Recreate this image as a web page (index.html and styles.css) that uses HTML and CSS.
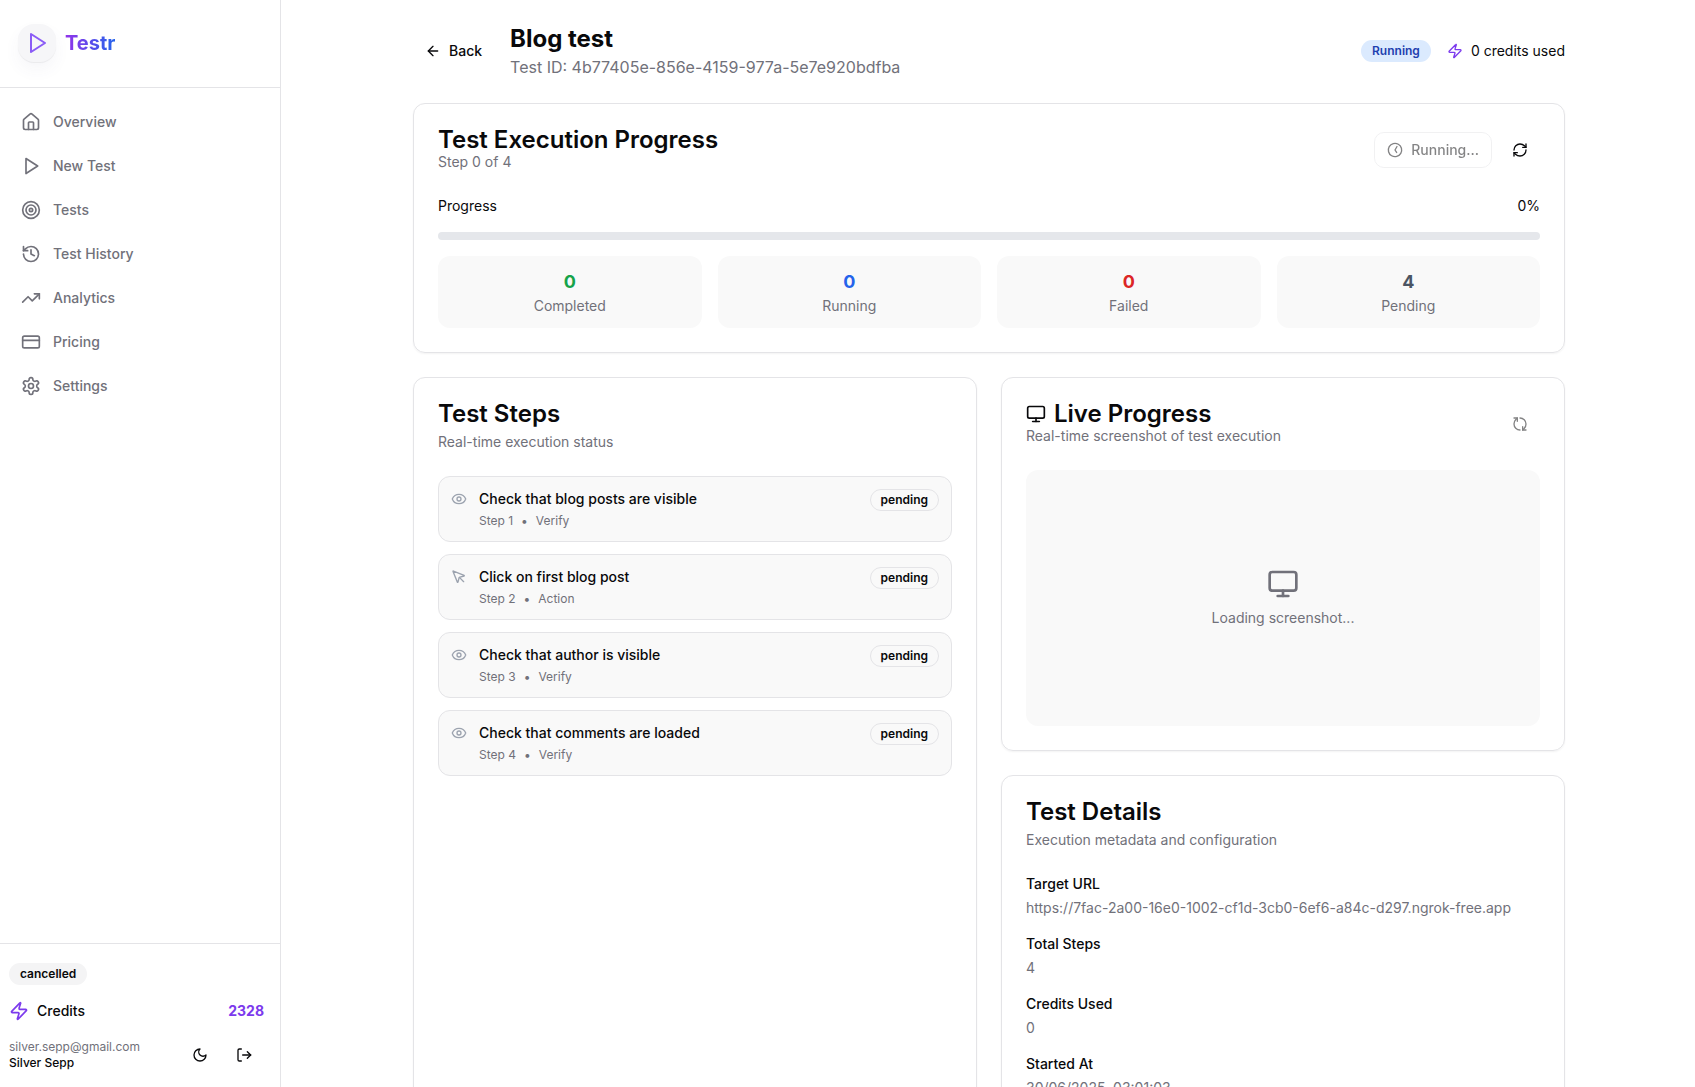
FILE: index.html
```html
<!DOCTYPE html>
<html lang="en">
<head>
<meta charset="utf-8">
<title>Blog test - Testr</title>
<meta name="viewport" content="width=device-width, initial-scale=1">
<link rel="stylesheet" href="styles.css">
</head>
<body>
<svg class="sprite" aria-hidden="true">
  <symbol id="play" viewBox="0 0 24 24"><polygon points="6 3 20 12 6 21 6 3"/></symbol>
  <symbol id="house" viewBox="0 0 24 24"><path d="M15 21v-8a1 1 0 0 0-1-1h-4a1 1 0 0 0-1 1v8"/><path d="M3 10a2 2 0 0 1 .709-1.528l7-5.999a2 2 0 0 1 2.582 0l7 5.999A2 2 0 0 1 21 10v9a2 2 0 0 1-2 2H5a2 2 0 0 1-2-2z"/></symbol>
  <symbol id="target" viewBox="0 0 24 24"><circle cx="12" cy="12" r="10"/><circle cx="12" cy="12" r="6"/><circle cx="12" cy="12" r="2"/></symbol>
  <symbol id="history" viewBox="0 0 24 24"><path d="M3 12a9 9 0 1 0 9-9 9.75 9.75 0 0 0-6.74 2.74L3 8"/><path d="M3 3v5h5"/><path d="M12 7v5l4 2"/></symbol>
  <symbol id="trending" viewBox="0 0 24 24"><polyline points="22 7 13.5 15.5 8.5 10.5 2 17"/><polyline points="16 7 22 7 22 13"/></symbol>
  <symbol id="card" viewBox="0 0 24 24"><rect width="20" height="14" x="2" y="5" rx="2"/><line x1="2" x2="22" y1="10" y2="10"/></symbol>
  <symbol id="settings" viewBox="0 0 24 24"><path d="M12.22 2h-.44a2 2 0 0 0-2 2v.18a2 2 0 0 1-1 1.73l-.43.25a2 2 0 0 1-2 0l-.15-.08a2 2 0 0 0-2.73.73l-.22.38a2 2 0 0 0 .73 2.73l.15.1a2 2 0 0 1 1 1.72v.51a2 2 0 0 1-1 1.74l-.15.09a2 2 0 0 0-.73 2.73l.22.38a2 2 0 0 0 2.73.73l.15-.08a2 2 0 0 1 2 0l.43.25a2 2 0 0 1 1 1.73V20a2 2 0 0 0 2 2h.44a2 2 0 0 0 2-2v-.18a2 2 0 0 1 1-1.73l.43-.25a2 2 0 0 1 2 0l.15.08a2 2 0 0 0 2.73-.73l.22-.39a2 2 0 0 0-.73-2.73l-.15-.08a2 2 0 0 1-1-1.74v-.5a2 2 0 0 1 1-1.74l.15-.09a2 2 0 0 0 .73-2.73l-.22-.38a2 2 0 0 0-2.73-.73l-.15.08a2 2 0 0 1-2 0l-.43-.25a2 2 0 0 1-1-1.73V4a2 2 0 0 0-2-2z"/><circle cx="12" cy="12" r="3"/></symbol>
  <symbol id="zap" viewBox="0 0 24 24"><path d="M4 14a1 1 0 0 1-.78-1.63l9.9-10.2a.5.5 0 0 1 .86.46l-1.92 6.02A1 1 0 0 0 13 10h7a1 1 0 0 1 .78 1.63l-9.9 10.2a.5.5 0 0 1-.86-.46l1.92-6.02A1 1 0 0 0 11 14z"/></symbol>
  <symbol id="moon" viewBox="0 0 24 24"><path d="M12 3a6 6 0 0 0 9 9 9 9 0 1 1-9-9Z"/></symbol>
  <symbol id="logout" viewBox="0 0 24 24"><path d="M8 21H5a2 2 0 0 1-2-2V5a2 2 0 0 1 2-2h3"/><polyline points="17 17 22 12 17 7"/><line x1="22" x2="10" y1="12" y2="12"/></symbol>
  <symbol id="back" viewBox="0 0 24 24"><path d="m12 19-7-7 7-7"/><path d="M19 12H5"/></symbol>
  <symbol id="clock" viewBox="0 0 24 24"><circle cx="12" cy="12" r="10"/><polyline points="12 6 12 12 16 14"/></symbol>
  <symbol id="refresh" viewBox="0 0 24 24"><path d="M3 12a9 9 0 0 1 9-9 9.75 9.75 0 0 1 6.74 2.74L21 8"/><path d="M21 3v5h-5"/><path d="M21 12a9 9 0 0 1-9 9 9.75 9.75 0 0 1-6.74-2.74L3 16"/><path d="M8 16H3v5"/></symbol>
  <symbol id="eye" viewBox="0 0 24 24"><path d="M2.062 12.348a1 1 0 0 1 0-.696 10.75 10.75 0 0 1 19.876 0 1 1 0 0 1 0 .696 10.75 10.75 0 0 1-19.876 0"/><circle cx="12" cy="12" r="3"/></symbol>
  <symbol id="pointer" viewBox="0 0 24 24"><path d="M12.6 12.6 19 19"/><path d="M3.688 3.037a.497.497 0 0 0-.651.651l6.5 15.999a.501.501 0 0 0 .947-.062l1.569-6.083a2 2 0 0 1 1.448-1.479l6.124-1.579a.5.5 0 0 0 .063-.947z"/></symbol>
  <symbol id="monitor" viewBox="0 0 24 24"><rect width="20" height="14" x="2" y="3" rx="2"/><line x1="8" x2="16" y1="21" y2="21"/><line x1="12" x2="12" y1="17" y2="21"/></symbol>
</svg>

<div class="app">
  <aside class="sidebar">
    <a class="brand" href="#">
      <span class="brand-mark"><svg class="icon icon-24"><use href="#play"/></svg></span>
      <span class="brand-name">Testr</span>
    </a>
    <nav class="nav">
      <a class="nav-link" href="#"><svg class="icon icon-20"><use href="#house"/></svg>Overview</a>
      <a class="nav-link" href="#"><svg class="icon icon-20"><use href="#play"/></svg>New Test</a>
      <a class="nav-link" href="#"><svg class="icon icon-20"><use href="#target"/></svg>Tests</a>
      <a class="nav-link" href="#"><svg class="icon icon-20"><use href="#history"/></svg>Test History</a>
      <a class="nav-link" href="#"><svg class="icon icon-20"><use href="#trending"/></svg>Analytics</a>
      <a class="nav-link" href="#"><svg class="icon icon-20"><use href="#card"/></svg>Pricing</a>
      <a class="nav-link" href="#"><svg class="icon icon-20"><use href="#settings"/></svg>Settings</a>
    </nav>
    <div class="account">
      <span class="badge badge-muted">cancelled</span>
      <div class="credits">
        <svg class="icon icon-20 accent"><use href="#zap"/></svg>
        <span>Credits</span>
        <strong class="credits-count">2328</strong>
      </div>
      <div class="user">
        <div class="user-text">
          <div class="user-email">silver.sepp@gmail.com</div>
          <div class="user-name">Silver Sepp</div>
        </div>
        <button class="button" type="button" aria-label="Toggle theme"><svg class="icon icon-16"><use href="#moon"/></svg></button>
        <button class="button" type="button" aria-label="Log out"><svg class="icon icon-16"><use href="#logout"/></svg></button>
      </div>
    </div>
  </aside>

  <main class="main">
    <div class="page">
      <header class="page-header">
        <button class="button" type="button"><svg class="icon icon-16"><use href="#back"/></svg>Back</button>
        <div class="page-heading">
          <h1 class="page-title">Blog test</h1>
          <p class="page-id">Test ID: 4b77405e-856e-4159-977a-5e7e920bdfba</p>
        </div>
        <div class="page-status">
          <span class="badge badge-info">Running</span>
          <span class="used"><svg class="icon icon-16 accent"><use href="#zap"/></svg>0 credits used</span>
        </div>
      </header>

      <section class="panel">
        <div class="panel-header panel-header-row">
          <div>
            <h2 class="panel-title">Test Execution Progress</h2>
            <p class="panel-note">Step 0 of 4</p>
          </div>
          <div class="actions">
            <button class="button button-outline" type="button" disabled><svg class="icon icon-16 spin-clock"><use href="#clock"/></svg>Running...</button>
            <button class="button" type="button" aria-label="Refresh"><svg class="icon icon-16"><use href="#refresh"/></svg></button>
          </div>
        </div>
        <div class="progress">
          <div class="progress-label"><span>Progress</span><span>0%</span></div>
          <div class="progress-track" role="progressbar" aria-label="Progress" aria-valuenow="0" aria-valuemin="0" aria-valuemax="100"></div>
          <div class="stats">
            <div class="stat"><div class="stat-value green">0</div><div class="stat-label">Completed</div></div>
            <div class="stat"><div class="stat-value blue">0</div><div class="stat-label">Running</div></div>
            <div class="stat"><div class="stat-value red">0</div><div class="stat-label">Failed</div></div>
            <div class="stat"><div class="stat-value slate">4</div><div class="stat-label">Pending</div></div>
          </div>
        </div>
      </section>

      <div class="columns">
        <section class="panel">
          <div class="panel-header panel-header-stack">
            <h2 class="panel-title">Test Steps</h2>
            <p class="panel-note">Real-time execution status</p>
          </div>
          <ol class="steps">
            <li class="step">
              <svg class="icon icon-16 step-icon"><use href="#eye"/></svg>
              <div class="step-body"><div class="step-title">Check that blog posts are visible</div><div class="step-meta"><span>Step 1</span><span>•</span><span>Verify</span></div></div>
              <span class="badge badge-outline">pending</span>
            </li>
            <li class="step">
              <svg class="icon icon-16 step-icon"><use href="#pointer"/></svg>
              <div class="step-body"><div class="step-title">Click on first blog post</div><div class="step-meta"><span>Step 2</span><span>•</span><span>Action</span></div></div>
              <span class="badge badge-outline">pending</span>
            </li>
            <li class="step">
              <svg class="icon icon-16 step-icon"><use href="#eye"/></svg>
              <div class="step-body"><div class="step-title">Check that author is visible</div><div class="step-meta"><span>Step 3</span><span>•</span><span>Verify</span></div></div>
              <span class="badge badge-outline">pending</span>
            </li>
            <li class="step">
              <svg class="icon icon-16 step-icon"><use href="#eye"/></svg>
              <div class="step-body"><div class="step-title">Check that comments are loaded</div><div class="step-meta"><span>Step 4</span><span>•</span><span>Verify</span></div></div>
              <span class="badge badge-outline">pending</span>
            </li>
          </ol>
        </section>

        <div class="column">
          <section class="panel">
            <div class="panel-header panel-header-row">
              <div>
                <h2 class="panel-title"><svg class="icon icon-20"><use href="#monitor"/></svg>Live Progress</h2>
                <p class="panel-note">Real-time screenshot of test execution</p>
              </div>
              <button class="button" type="button" aria-label="Refresh screenshot" disabled><svg class="icon icon-16 spin-refresh"><use href="#refresh"/></svg></button>
            </div>
            <div class="preview">
              <svg class="icon icon-32"><use href="#monitor"/></svg>
              <p>Loading screenshot...</p>
            </div>
          </section>

          <section class="panel">
            <div class="panel-header panel-header-stack">
              <h2 class="panel-title">Test Details</h2>
              <p class="panel-note">Execution metadata and configuration</p>
            </div>
            <dl class="details">
              <div class="detail"><dt>Target URL</dt><dd>https://7fac-2a00-16e0-1002-cf1d-3cb0-6ef6-a84c-d297.ngrok-free.app</dd></div>
              <div class="detail"><dt>Total Steps</dt><dd>4</dd></div>
              <div class="detail"><dt>Credits Used</dt><dd>0</dd></div>
              <div class="detail"><dt>Started At</dt><dd>30/06/2025, 03:01:03</dd></div>
            </dl>
          </section>
        </div>
      </div>
    </div>
  </main>
</div>
</body>
</html>
```
FILE: styles.css
```css
:root {
  --ink: #09090b;
  --muted: #71717a;
  --line: #e4e4e7;
  --soft: #f9f9f9;
  --accent: #7c3aed;
}

* { box-sizing: border-box; }

body {
  margin: 0;
  background: #fff;
  color: var(--ink);
  font: 14px/20px Inter, "Liberation Sans", sans-serif;
}

h1, h2, p, ol, dl, dd { margin: 0; padding: 0; }
a { color: inherit; text-decoration: none; }
.sprite { display: none; }

.icon {
  flex: none;
  fill: none;
  stroke: currentColor;
  stroke-width: 2;
  stroke-linecap: round;
  stroke-linejoin: round;
}
.icon-16 { width: 16px; height: 16px; }
.icon-20 { width: 20px; height: 20px; }
.icon-24 { width: 24px; height: 24px; }
.icon-32 { width: 32px; height: 32px; }
.accent { color: var(--accent); }

.app {
  display: flex;
  height: 100vh;
  overflow: hidden;
}

/* Sidebar */
.sidebar {
  display: flex;
  flex: none;
  flex-direction: column;
  width: 281px;
  border-right: 1px solid var(--line);
}
.brand {
  display: flex;
  align-items: center;
  gap: 9px;
  height: 88px;
  padding: 0 18px 2px;
  border-bottom: 1px solid var(--line);
}
.brand-mark {
  display: grid;
  place-items: center;
  width: 38px;
  height: 38px;
  border-radius: 16px;
  background: #f6f6f8;
  color: #8b5cf6;
  box-shadow: 0 1px 1px rgba(0, 0, 0, .06), 0 8px 16px rgba(80, 80, 140, .05);
}
.brand-name {
  background: linear-gradient(90deg, #9333ea, #2563eb);
  background-clip: text;
  color: transparent;
  font-size: 20px;
  font-weight: 700;
  line-height: 28px;
}
.nav {
  display: grid;
  gap: 4px;
  padding: 14px 9px;
}
.nav-link {
  display: flex;
  align-items: center;
  gap: 12px;
  height: 40px;
  padding: 0 12px;
  border-radius: 8px;
  color: var(--muted);
  font-weight: 500;
}
.account {
  margin-top: auto;
  padding: 19px 16px 14px 9px;
  border-top: 1px solid var(--line);
}
.credits {
  display: flex;
  align-items: center;
  gap: 8px;
  margin: 16px 0;
  font-weight: 500;
}
.credits-count {
  margin-left: auto;
  color: var(--accent);
  font-weight: 700;
}
.user {
  display: flex;
  align-items: center;
  gap: 4px;
}
.user-text {
  flex: 1;
  font-size: 12px;
  line-height: 16px;
}
.user-email { color: var(--muted); }
.user-name { font-weight: 500; }

/* Shared controls */
.button {
  display: inline-flex;
  align-items: center;
  justify-content: center;
  gap: 8px;
  height: 36px;
  padding: 0 12px;
  border: 0;
  border-radius: 10px;
  background: none;
  color: inherit;
  font: inherit;
  font-weight: 500;
}
.button:disabled { opacity: .5; }
.button-outline { border: 1px solid var(--line); }
.badge {
  display: inline-flex;
  align-items: center;
  height: 22px;
  padding: 0 10px;
  border: 1px solid transparent;
  border-radius: 11px;
  font-size: 12px;
  font-weight: 600;
  line-height: 16px;
}
.badge-muted { background: #f4f4f5; }
.badge-info { background: #dbeafe; color: #1e40af; }
.badge-outline { border-color: var(--line); }

/* Page */
.main {
  flex: 1;
  min-width: 0;
  padding: 23px 24px 24px 26px;
  overflow: hidden;
}
.page {
  display: grid;
  gap: 24px;
  max-width: 1152px;
  margin: 0 auto;
}
.page-header {
  display: flex;
  align-items: center;
  gap: 16px;
}
.page-title {
  font-size: 24px;
  font-weight: 700;
  line-height: 32px;
}
.page-id {
  color: var(--muted);
  font-size: 16px;
  line-height: 24px;
}
.page-status {
  display: flex;
  align-items: center;
  gap: 16px;
  margin-left: auto;
}
.used {
  display: flex;
  align-items: center;
  gap: 8px;
}

.panel {
  padding: 24px;
  border: 1px solid var(--line);
  border-radius: 12px;
  box-shadow: 0 1px 2px rgba(0, 0, 0, .05);
}
.panel-header { margin-bottom: 24px; }
.panel-header-row {
  display: flex;
  align-items: center;
  justify-content: space-between;
}
.panel-header-stack {
  display: grid;
  gap: 6px;
}
.panel-title {
  display: flex;
  align-items: center;
  gap: 8px;
  font-size: 24px;
  font-weight: 600;
  line-height: 24px;
}
.panel-note { color: var(--muted); }
.actions { display: flex; gap: 8px; }

.progress { display: grid; gap: 16px; }
.progress-label { display: flex; justify-content: space-between; }
.progress-track {
  height: 8px;
  border-radius: 4px;
  background: #e5e7eb;
}
.stats {
  display: grid;
  grid-template-columns: repeat(4, 1fr);
  gap: 16px;
}
.stat {
  padding: 12px;
  border-radius: 12px;
  background: var(--soft);
  text-align: center;
}
.stat-value {
  font-size: 18px;
  font-weight: 700;
  line-height: 28px;
}
.stat-label { color: var(--muted); }
.green { color: #16a34a; }
.blue { color: #2563eb; }
.red { color: #dc2626; }
.slate { color: #4b5563; }

.columns {
  display: grid;
  grid-template-columns: 1fr 1fr;
  gap: 24px;
}
.column {
  display: grid;
  gap: 24px;
  align-content: start;
}
.steps {
  display: grid;
  gap: 12px;
  list-style: none;
}
.step {
  display: flex;
  align-items: flex-start;
  gap: 12px;
  padding: 12px;
  border: 1px solid var(--line);
  border-radius: 12px;
  background: var(--soft);
}
.step-icon { margin-top: 2px; color: #9ca3af; }
.step-body { flex: 1; }
.step-title { font-weight: 500; }
.step-meta {
  display: flex;
  gap: 8px;
  margin-top: 4px;
  color: var(--muted);
  font-size: 12px;
  line-height: 16px;
}
.preview {
  display: flex;
  flex-direction: column;
  align-items: center;
  justify-content: center;
  gap: 8px;
  height: 256px;
  border-radius: 12px;
  background: var(--soft);
  color: var(--muted);
}
.details { display: grid; gap: 16px; }
.detail { display: grid; gap: 4px; }
.detail dt { font-weight: 500; }
.detail dd { color: var(--muted); overflow-wrap: anywhere; }

.spin-clock { transform: rotate(30deg); }
.spin-refresh { transform: rotate(90deg); }
```
